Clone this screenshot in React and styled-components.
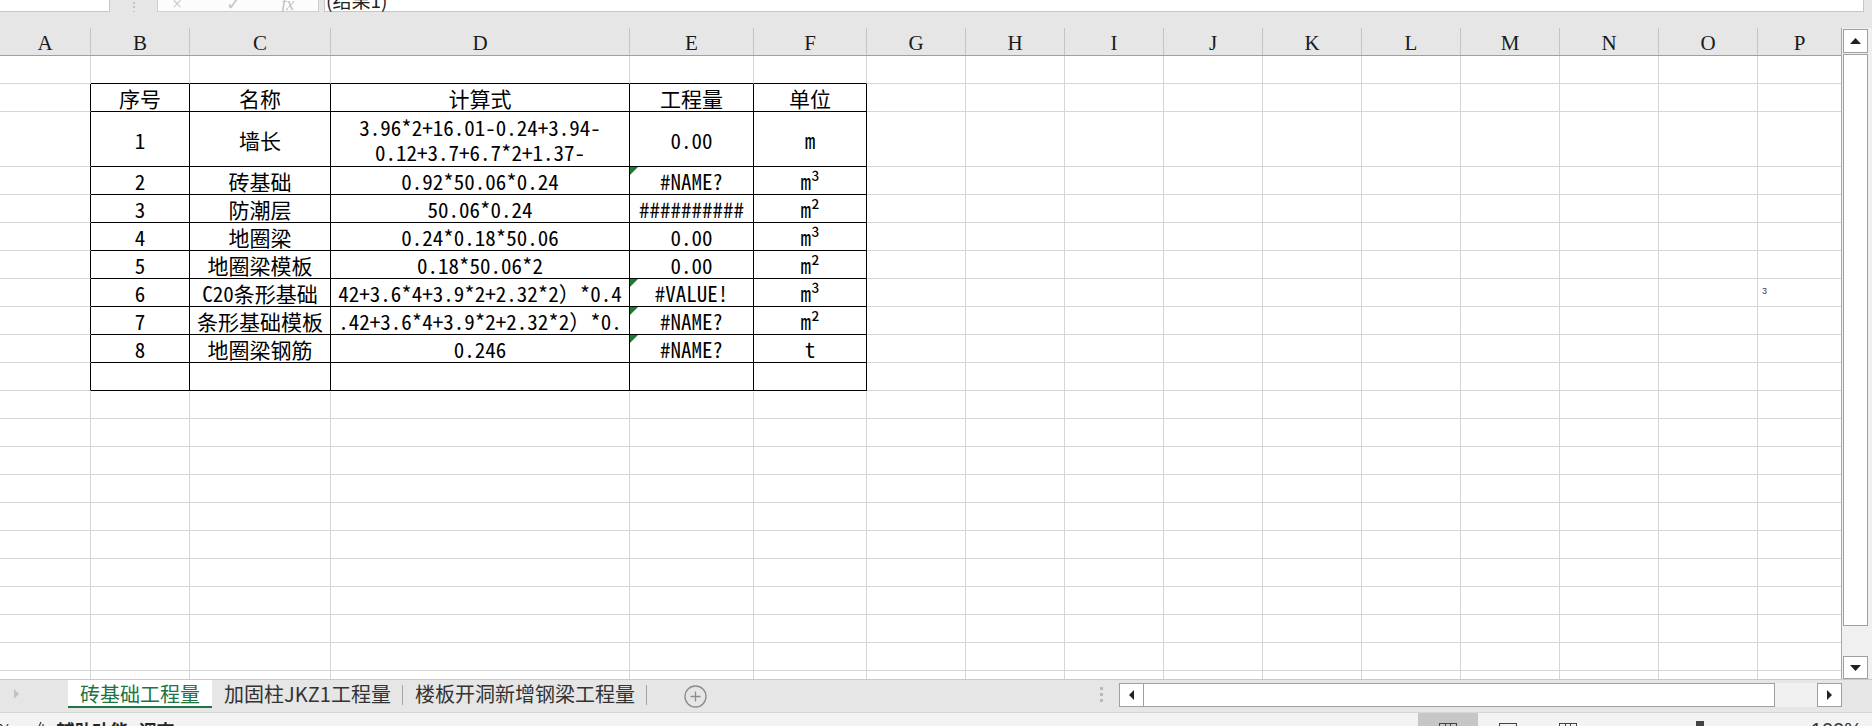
import React from "react";
import styled, { createGlobalStyle } from "styled-components";

const GlobalStyle = createGlobalStyle`
  html, body {
    margin: 0;
    padding: 0;
    background: #ffffff;
  }
  body {
    font-family: "Noto Sans CJK SC", "Noto Sans", sans-serif;
  }
`;

// column widths in px, A..P
const COLS = [
  ["A", 91], ["B", 99], ["C", 141], ["D", 299], ["E", 124], ["F", 113],
  ["G", 99], ["H", 99], ["I", 99], ["J", 99], ["K", 99], ["L", 99],
  ["M", 99], ["N", 99], ["O", 99], ["P", 84],
];

// table lives in rows 1..10, columns B..F (index 1..5)
const TABLE = {
  1: [{ t: "序号" }, { t: "名称" }, { t: "计算式" }, { t: "工程量" }, { t: "单位" }],
  2: [
    { t: "1" },
    { t: "墙长" },
    { lines: ["3.96*2+16.01-0.24+3.94-", "0.12+3.7+6.7*2+1.37-"] },
    { t: "0.00" },
    { t: "m" },
  ],
  3: [{ t: "2" }, { t: "砖基础" }, { t: "0.92*50.06*0.24" }, { t: "#NAME?", flag: true }, { t: "m³" }],
  4: [{ t: "3" }, { t: "防潮层" }, { t: "50.06*0.24" }, { t: "##########" }, { t: "m²" }],
  5: [{ t: "4" }, { t: "地圈梁" }, { t: "0.24*0.18*50.06" }, { t: "0.00" }, { t: "m³" }],
  6: [{ t: "5" }, { t: "地圈梁模板" }, { t: "0.18*50.06*2" }, { t: "0.00" }, { t: "m²" }],
  7: [{ t: "6" }, { t: "C20条形基础" }, { t: "42+3.6*4+3.9*2+2.32*2）*0.4" }, { t: "#VALUE!", flag: true }, { t: "m³" }],
  8: [{ t: "7" }, { t: "条形基础模板" }, { t: ".42+3.6*4+3.9*2+2.32*2）*0." }, { t: "#NAME?", flag: true }, { t: "m²" }],
  9: [{ t: "8" }, { t: "地圈梁钢筋" }, { t: "0.246" }, { t: "#NAME?", flag: true }, { t: "t" }],
  10: [{}, {}, {}, {}, {}],
};

const ROW_COUNT = 23;

const Frame = styled.div`
  width: 1872px;
  height: 726px;
  overflow: hidden;
  display: flex;
  flex-direction: column;
  background: #ffffff;
`;

/* ---------- formula bar (only its lower edge is on screen) ---------- */

const TopBar = styled.div`
  height: 28px;
  flex: none;
  background: #e6e6e6;
`;

const FormulaRow = styled.div`
  height: 12px;
  display: flex;
  overflow: hidden;
`;

const NameBox = styled.div`
  width: 110px;
  flex: none;
  box-sizing: border-box;
  background: #ffffff;
  border-right: 1px solid #c6c6c6;
  border-bottom: 1px solid #c6c6c6;
`;

const Grip = styled.div`
  width: 47px;
  flex: none;
  display: flex;
  justify-content: center;
  align-items: flex-end;
  color: #b5b5b5;
  font-size: 12px;
  line-height: 12px;
`;

const FxBox = styled.div`
  width: 162px;
  flex: none;
  box-sizing: border-box;
  background: #fcfcfc;
  border: 1px solid #cfcfcf;
  border-top: none;
  display: flex;
  align-items: flex-end;
  color: #c4c4c4;
  font-family: "Liberation Serif", serif;
  font-size: 18px;
  line-height: 14px;
`;

const FxItem = styled.span`
  margin-left: ${(p) => p.$ml}px;
  font-style: ${(p) => (p.$italic ? "italic" : "normal")};
`;

const FormulaInput = styled.div`
  width: 1540px;
  margin-left: 5px;
  flex: none;
  box-sizing: border-box;
  background: #ffffff;
  border: 1px solid #c6c6c6;
  border-top: none;
  display: flex;
  align-items: flex-end;
  padding-left: 1px;
  font-family: "Noto Sans CJK SC", sans-serif;
  font-size: 19px;
  line-height: 22px;
  color: #222;
`;

/* ---------- sheet ---------- */

const Body = styled.div`
  height: 651px;
  flex: none;
  display: flex;
`;

const Sheet = styled.div`
  width: 1842px;
  flex: none;
  display: flex;
  flex-direction: column;
  box-sizing: border-box;
  border-right: 1px solid #a8a8a8;
  overflow: hidden;
`;

const HeaderRow = styled.div`
  height: 27px;
  flex: none;
  display: flex;
  background: #e6e6e6;
  border-bottom: 1px solid #9f9f9f;
`;

const HeaderCell = styled.div`
  width: ${(p) => p.$w}px;
  flex: none;
  box-sizing: border-box;
  border-right: 1px solid #c4c4c4;
  display: flex;
  align-items: center;
  justify-content: center;
  padding-top: 3px;
  font-family: "Liberation Serif", serif;
  font-size: 21px;
  color: #1a1a1a;
`;

const Grid = styled.div`
  flex: 1;
  overflow: hidden;
`;

const Row = styled.div`
  height: ${(p) => p.$h}px;
  display: flex;
`;

const Cell = styled.div`
  width: ${(p) => p.$w}px;
  flex: none;
  box-sizing: border-box;
  position: relative;
  overflow: hidden;
  white-space: nowrap;
  border-right: 1px solid ${(p) => (p.$rb ? "#000000" : "#d6d6d6")};
  border-bottom: 1px solid ${(p) => (p.$bb ? "#000000" : "#d6d6d6")};
  display: flex;
  align-items: center;
  justify-content: center;
  padding-top: 2px;
  font-family: "Noto Sans Mono CJK SC", "Noto Sans CJK SC", monospace;
  font-size: 21px;
  line-height: 25px;
  color: #000000;
`;

const Lines = styled.div`
  display: flex;
  flex-direction: column;
  align-items: center;
  & > span {
    display: block;
    height: 25px;
    line-height: 25px;
  }
`;

const ErrorFlag = styled.span`
  position: absolute;
  top: 0;
  left: 0;
  width: 0;
  height: 0;
  border-top: 8px solid #1e7b34;
  border-right: 8px solid transparent;
`;

const Tiny = styled.span`
  align-self: flex-start;
  margin: 5px auto 0 4px;
  font-family: "Liberation Sans", sans-serif;
  font-size: 9px;
  line-height: 10px;
  color: #2b3d6b;
`;

/* ---------- vertical scrollbar ---------- */

const VScroll = styled.div`
  width: 30px;
  flex: none;
  box-sizing: border-box;
  background: #f0f0f0;
  display: flex;
  flex-direction: column;
  padding: 1px 4px 0 1px;
`;

const ScrollButton = styled.div`
  width: ${(p) => p.$w || 25}px;
  height: ${(p) => p.$h || 24}px;
  flex: none;
  box-sizing: border-box;
  background: #ffffff;
  border: 1px solid #a0a0a0;
  display: flex;
  align-items: center;
  justify-content: center;
`;

const VThumb = styled.div`
  height: 572px;
  flex: none;
  box-sizing: border-box;
  margin-top: 1px;
  background: #ffffff;
  border: 1px solid #a0a0a0;
`;

const Filler = styled.div`
  flex: 1;
`;

/* ---------- sheet tabs + horizontal scrollbar ---------- */

const TabBar = styled.div`
  height: 33px;
  flex: none;
  box-sizing: border-box;
  display: flex;
  align-items: flex-start;
  background: #e6e6e6;
  border-top: 1px solid #c8c8c8;
`;

const TabNav = styled.div`
  width: 68px;
  height: 28px;
  flex: none;
  box-sizing: border-box;
  padding-left: 14px;
  display: flex;
  align-items: center;
`;

const Tab = styled.div`
  width: ${(p) => p.$w}px;
  height: 28px;
  flex: none;
  box-sizing: border-box;
  display: flex;
  align-items: center;
  justify-content: center;
  font-family: "Noto Sans CJK SC", sans-serif;
  font-size: 20px;
  background: ${(p) => (p.$active ? "#ffffff" : "transparent")};
  color: ${(p) => (p.$active ? "#217346" : "#333333")};
  border-bottom: 2px solid ${(p) => (p.$active ? "#217346" : "transparent")};
  position: relative;
  &::after {
    content: "";
    display: ${(p) => (p.$sep ? "block" : "none")};
    position: absolute;
    right: 0;
    top: 5px;
    bottom: 1px;
    width: 1px;
    background: #a6a6a6;
  }
`;

const AddSheet = styled.div`
  width: 23px;
  height: 23px;
  flex: none;
  margin: 5px 0 0 37px;
  display: flex;
`;

const SplitGrip = styled.div`
  width: 4px;
  height: 28px;
  flex: none;
  margin-left: 393px;
  display: flex;
  flex-direction: column;
  justify-content: center;
  gap: 3px;
  & > i {
    display: block;
    width: 3px;
    height: 3px;
    background: #b9b9b9;
  }
`;

const HScroll = styled.div`
  width: 723px;
  height: 24px;
  flex: none;
  margin: 3px 0 0 15px;
  display: flex;
  background: #f0f0f0;
`;

const HThumb = styled.div`
  width: 631px;
  flex: none;
  box-sizing: border-box;
  background: #ffffff;
  border: 1px solid #a0a0a0;
  border-left: none;
`;

/* ---------- status bar (clipped by window) ---------- */

const StatusBar = styled.div`
  height: 14px;
  flex: none;
  overflow: hidden;
  background: #f3f3f3;
  border-top: 1px solid #d6d6d6;
`;

const StatusInner = styled.div`
  height: 34px;
  display: flex;
  align-items: center;
  font-family: "Noto Sans CJK SC", sans-serif;
  font-size: 18px;
  color: #262626;
`;

const StatusText = styled.span`
  margin-left: ${(p) => p.$ml || 0}px;
  font-weight: ${(p) => (p.$bold ? 700 : 400)};
  white-space: nowrap;
`;

const ViewButtons = styled.div`
  display: flex;
  margin-left: auto;
  height: 100%;
`;

const ViewButton = styled.div`
  width: 60px;
  height: 100%;
  display: flex;
  align-items: center;
  justify-content: center;
  background: ${(p) => (p.$on ? "#c6c6c6" : "transparent")};
`;

const ZoomThumb = styled.div`
  width: 8px;
  height: 18px;
  margin-left: 98px;
  background: #444444;
`;

const ZoomPlus = styled.span`
  margin-left: 80px;
  font-size: 20px;
  color: #444;
`;

const ZoomPct = styled.span`
  margin-left: 16px;
  margin-right: 10px;
  font-family: "Liberation Sans", sans-serif;
  font-size: 20px;
  color: #333;
`;

/* ---------- small drawings ---------- */

const Tri = ({ dir, color = "#222", w = 10, h = 6 }) => {
  const pts = {
    up: `0,${h} ${w / 2},0 ${w},${h}`,
    down: `0,0 ${w},0 ${w / 2},${h}`,
    left: `${w},0 ${w},${h} 0,${h / 2}`,
    right: `0,0 ${w},${h / 2} 0,${h}`,
  }[dir];
  return (
    <svg width={w} height={h} viewBox={`0 0 ${w} ${h}`}>
      <polygon points={pts} fill={color} />
    </svg>
  );
};

const PlusCircle = () => (
  <svg width="23" height="23" viewBox="0 0 23 23">
    <circle cx="11.5" cy="11.5" r="10.5" fill="none" stroke="#8c8c8c" strokeWidth="1.3" />
    <path d="M11.5 6.5v10M6.5 11.5h10" stroke="#8c8c8c" strokeWidth="1.3" />
  </svg>
);

const NormalIcon = () => (
  <svg width="20" height="16" viewBox="0 0 20 16">
    <rect x="1.5" y="1.5" width="17" height="13" fill="none" stroke="#444" strokeWidth="1" />
    <path d="M7.5 1.5v13M12.5 1.5v13M1.5 5.5h17" stroke="#444" strokeWidth="1" />
  </svg>
);

const LayoutIcon = () => (
  <svg width="20" height="16" viewBox="0 0 20 16">
    <rect x="1.5" y="1.5" width="17" height="13" fill="none" stroke="#444" strokeWidth="1" />
    <rect x="5.5" y="4.5" width="9" height="10" fill="none" stroke="#444" strokeWidth="1" />
  </svg>
);

const BreakIcon = () => (
  <svg width="20" height="16" viewBox="0 0 20 16">
    <rect x="1.5" y="1.5" width="17" height="13" fill="none" stroke="#444" strokeWidth="1" />
    <path d="M7.5 1.5v13M12.5 1.5v13M1.5 8.5h17" stroke="#444" strokeWidth="1" />
  </svg>
);

const A11yIcon = () => (
  <svg width="16" height="18" viewBox="0 0 16 18">
    <path d="M6 2 L3 9 M8 4 v8 M4 12 h8" stroke="#444" strokeWidth="1.3" fill="none" />
  </svg>
);

function rowHeight(r) {
  return r === 2 ? 55 : 28;
}

function renderCell(r, c) {
  const inTable = r >= 1 && r <= 10;
  const tableCol = c >= 1 && c <= 5;
  const bb = (r >= 0 && r <= 10) && tableCol;
  const rb = inTable && c >= 0 && c <= 5;
  const data = inTable && tableCol ? TABLE[r][c - 1] : null;
  const [key, w] = COLS[c];
  return (
    <Cell key={key} $w={w} $rb={rb} $bb={bb}>
      {data && data.flag && <ErrorFlag />}
      {data && data.lines && (
        <Lines>
          {data.lines.map((l) => (
            <span key={l}>{l}</span>
          ))}
        </Lines>
      )}
      {data && data.t}
      {r === 7 && key === "P" && <Tiny>3</Tiny>}
    </Cell>
  );
}

export default function App() {
  const rows = Array.from({ length: ROW_COUNT }, (_, r) => r);
  return (
    <Frame>
      <GlobalStyle />
      <TopBar>
        <FormulaRow>
          <NameBox />
          <Grip>⋮</Grip>
          <FxBox>
            <FxItem $ml={14}>×</FxItem>
            <FxItem $ml={44}>✓</FxItem>
            <FxItem $ml={40} $italic>
              fx
            </FxItem>
          </FxBox>
          <FormulaInput>(结果1)</FormulaInput>
        </FormulaRow>
      </TopBar>

      <Body>
        <Sheet>
          <HeaderRow>
            {COLS.map(([k, w]) => (
              <HeaderCell key={k} $w={w}>
                {k}
              </HeaderCell>
            ))}
          </HeaderRow>
          <Grid>
            {rows.map((r) => (
              <Row key={r} $h={rowHeight(r)}>
                {COLS.map((_, c) => renderCell(r, c))}
              </Row>
            ))}
          </Grid>
        </Sheet>
        <VScroll>
          <ScrollButton>
            <Tri dir="up" w={11} h={6} />
          </ScrollButton>
          <VThumb />
          <Filler />
          <ScrollButton $h={23}>
            <Tri dir="down" w={11} h={6} />
          </ScrollButton>
        </VScroll>
      </Body>

      <TabBar>
        <TabNav>
          <Tri dir="right" color="#c2c2c2" w={5} h={10} />
        </TabNav>
        <Tab $active $w={144}>
          砖基础工程量
        </Tab>
        <Tab $w={191} $sep>
          加固柱JKZ1工程量
        </Tab>
        <Tab $w={244} $sep>
          楼板开洞新增钢梁工程量
        </Tab>
        <AddSheet>
          <PlusCircle />
        </AddSheet>
        <SplitGrip>
          <i />
          <i />
          <i />
        </SplitGrip>
        <HScroll>
          <ScrollButton $w={25} $h={24}>
            <Tri dir="left" w={5} h={10} />
          </ScrollButton>
          <HThumb />
          <Filler />
          <ScrollButton $w={25} $h={24}>
            <Tri dir="right" w={5} h={10} />
          </ScrollButton>
        </HScroll>
      </TabBar>

      <StatusBar>
        <StatusInner>
          <StatusText $ml={-4}>%</StatusText>
          <StatusText $ml={22}>
            <A11yIcon />
          </StatusText>
          <StatusText $ml={6} $bold>
            辅助功能: 调查
          </StatusText>
          <ViewButtons>
            <ViewButton $on>
              <NormalIcon />
            </ViewButton>
            <ViewButton>
              <LayoutIcon />
            </ViewButton>
            <ViewButton>
              <BreakIcon />
            </ViewButton>
          </ViewButtons>
          <ZoomThumb />
          <ZoomPlus>+</ZoomPlus>
          <ZoomPct>100%</ZoomPct>
        </StatusInner>
      </StatusBar>
    </Frame>
  );
}
